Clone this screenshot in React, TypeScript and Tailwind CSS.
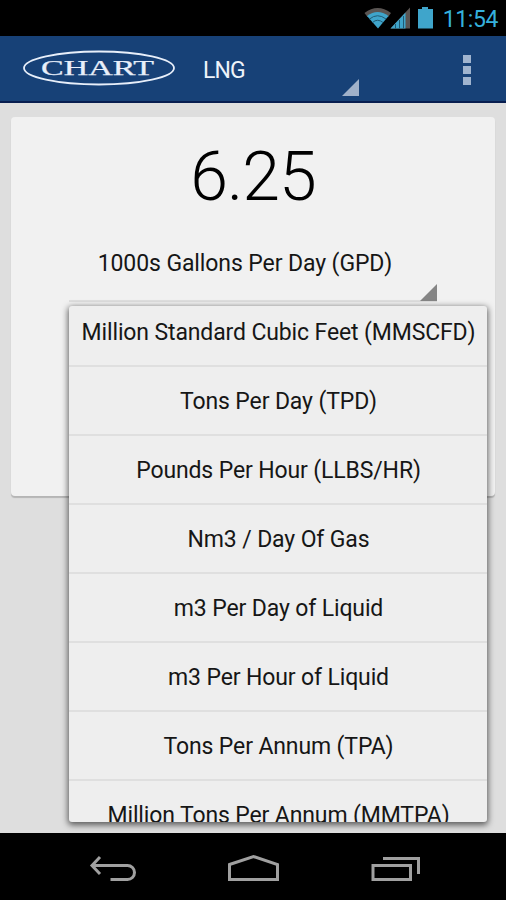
import { clsx } from 'clsx';

const units = [
  'Million Standard Cubic Feet (MMSCFD)',
  'Tons Per Day (TPD)',
  'Pounds Per Hour (LLBS/HR)',
  'Nm3 / Day Of Gas',
  'm3 Per Day of Liquid',
  'm3 Per Hour of Liquid',
  'Tons Per Annum (TPA)',
  'Million Tons Per Annum (MMTPA)',
];

function StatusBar() {
  return (
    <header className="flex h-9 shrink-0 items-center justify-end bg-black pr-2 text-[#35b0dc]">
      <svg width="70" height="24" viewBox="0 0 70 24" className="mr-[9px]">
        <path d="M0.5 7Q13.5-3 27 7L24 11Q13.5 3 3.5 11Z" fill="#5a5553" />
        <path d="M3 10Q13.5 2 24.5 10L14 22.5Z" fill="#3fa5cb" />
        <path d="M5.5 13Q13.5 6.5 22 13M8.5 16.5Q13.5 12 19 16.5" fill="none" stroke="#205a73" strokeWidth="1" />
        <path d="M26.5 22.5L46 1.5V22.5Z" fill="#5a5553" />
        <path d="M26.5 22.5L41.5 6.5V22.5Z" fill="#3fa5cb" />
        <path d="M31.5 18V22.5M35.5 14V22.5M39.5 10V22.5" stroke="#205a73" strokeWidth="1" />
        <path d="M54 3H58V1H64V3H69V22.5H54Z" fill="#3fa5cb" />
      </svg>
      <span className="pt-[3px] text-[23px] leading-8 tracking-[-0.4px]">11:54</span>
    </header>
  );
}

function ActionBar() {
  return (
    <div className="flex h-[67px] shrink-0 border-b-2 border-[#071d4f] bg-[#174177] pl-[23px]">
      <svg width="152" height="36" viewBox="0 0 152 36" className="mt-[14px]">
        <ellipse cx="76" cy="18" rx="75" ry="16.5" fill="none" stroke="#e8effa" strokeWidth="1.8" />
        <text x="18" y="25" textLength="113" lengthAdjust="spacingAndGlyphs" fill="#e8effa" stroke="#e8effa" strokeWidth="0.25" fontSize="20" className="font-['Liberation_Serif',serif]">CHART</text>
      </svg>
      <div className="flex w-[184px] items-end justify-between pb-[5px] pl-7">
        <span className="self-center pt-[9px] text-[23px] leading-7 tracking-[-0.9px] text-[#eef3fa]">LNG</span>
        <svg width="17" height="17" viewBox="0 0 17 17"><path d="M17 0V17H0Z" fill="#a0b1c9" /></svg>
      </div>
      <div className="ml-[104px] flex flex-col gap-[3px] pt-[19px]">
        <i className="size-2 bg-[#a0b4cf]" />
        <i className="size-2 bg-[#a0b4cf]" />
        <i className="size-2 bg-[#a0b4cf]" />
      </div>
    </div>
  );
}

function UnitMenu() {
  return (
    <div className="absolute top-[189px] left-[58px] h-[516px] w-[418px] overflow-hidden rounded-[3px] bg-[#eeeeee] shadow-[0_2px_6px_1px_rgba(0,0,0,0.6)]">
      <ul className="-mt-2">
        {units.map((unit, i) => (
          <li key={unit} className={clsx('flex h-[69px] items-center justify-center border-b-2 pt-[3px]', i < units.length - 1 ? 'border-[#dfdfdf]' : 'border-transparent')}>
            <span className="pl-px text-[23px] tracking-[-0.13px] whitespace-nowrap">{unit}</span>
          </li>
        ))}
      </ul>
    </div>
  );
}

function NavBar() {
  return (
    <nav className="flex h-[67px] shrink-0 items-center bg-black pt-[6px] pl-[90px]">
      <svg width="332" height="28" viewBox="0 0 332 28" fill="none" stroke="#a0a0a0" strokeWidth="3" className="overflow-visible">
        <path d="M10 1L2 9.5L10 18M2 9.5H37.5A7 7 0 0 1 37.5 23.5H20.5" />
        <path d="M139.5 8.5L163.5 0.5L187.5 8.5V23.5H139.5Z" />
        <path d="M283 9.5H320.5V23.5H283ZM293 2.5H328.5V18" />
      </svg>
    </nav>
  );
}

export default function App() {
  return (
    <div className="flex h-[900px] w-[506px] flex-col overflow-hidden bg-[#dedede] font-[Roboto,sans-serif] text-[#161616]">
      <StatusBar />
      <ActionBar />
      <main className="h-[730px] px-[11px] pt-[14px]">
        <section className="relative h-[379px] rounded-[4px] bg-[#f1f1f1] shadow-[0_2px_1px_#b5b5b5]">
          <div className="pt-5 text-center text-[68px] leading-[80px] font-light tracking-[-1px] text-black">6.25</div>
          <div className="ml-[58px] flex h-[85px] w-[368px] flex-col border-b-2 border-[#dedede] pt-[33px]">
            <span className="mr-4 text-center text-[23px] leading-7 tracking-[-0.1px] whitespace-nowrap">1000s Gallons Per Day (GPD)</span>
            <svg width="17" height="17" viewBox="0 0 17 17" className="mt-1.5 shrink-0 self-end"><path d="M17 0V17H0Z" fill="#858585" /></svg>
          </div>
          <UnitMenu />
        </section>
      </main>
      <NavBar />
    </div>
  );
}
